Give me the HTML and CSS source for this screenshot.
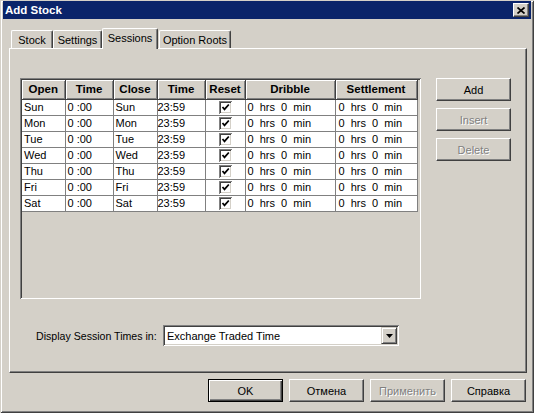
FILE: index.html
```html
<!DOCTYPE html>
<html lang="en">

<head>
    <meta charset="UTF-8">
    <title>Add Stock</title>
    <link rel="stylesheet" href="styles.css">
</head>

<body>
    <div class="window">
        <div class="titlebar">
            <span class="title">Add Stock</span>
            <span class="close-btn">
                <svg width="8" height="7" viewBox="0 0 8 7">
                    <path d="M0.5 0.5 L7.5 6.5 M7.5 0.5 L0.5 6.5" stroke="#000" stroke-width="1.7" fill="none"/>
                </svg>
            </span>
        </div>
        <div class="dialog">
            <!-- tab strip -->
            <div class="tabs">
                <div class="tab tab-stock">Stock</div>
                <div class="tab tab-settings">Settings</div>
                <div class="tab tab-sessions selected">Sessions</div>
                <div class="tab tab-roots">Option Roots</div>
            </div>
            <div class="panel">
                <div class="panel-main">
                    <div class="grid-box">
                        <table class="sessions">
                            <colgroup>
                                <col style="width:43px"><col style="width:48px"><col style="width:44px">
                                <col style="width:48px"><col style="width:40px"><col style="width:90px">
                                <col style="width:82px">
                            </colgroup>
                            <thead>
                                <tr>
                                    <th>Open</th><th>Time</th><th>Close</th><th>Time</th>
                                    <th>Reset</th><th>Dribble</th><th>Settlement</th>
                                </tr>
                            </thead>
                            <tbody id="rows"></tbody>
                        </table>
                    </div>
                    <div class="side-buttons">
                        <div class="btn">Add</div>
                        <div class="btn disabled">Insert</div>
                        <div class="btn disabled">Delete</div>
                    </div>
                </div>
                <div class="display-row">
                    <span class="display-label">Display Session Times in:</span>
                    <div class="combo">
                        <span class="combo-text">Exchange Traded Time</span>
                        <span class="combo-arrow">
                            <svg width="7" height="4" viewBox="0 0 7 4"><polygon points="0,0 7,0 3.5,4" fill="#000"/></svg>
                        </span>
                    </div>
                </div>
            </div>
            <div class="footer">
                <div class="btn default">OK</div>
                <div class="btn">Отмена</div>
                <div class="btn disabled">Применить</div>
                <div class="btn">Справка</div>
            </div>
        </div>
    </div>
    <script>
        // 요일별 세션 행 만들기
        var days = ["Sun", "Mon", "Tue", "Wed", "Thu", "Fri", "Sat"];
        var rows = document.getElementById("rows");
        var check = '<span class="checkbox"><svg width="9" height="9" viewBox="0 0 9 9">' +
            '<path d="M1.5 4 L3.5 6.3 L7.8 1.5" stroke="#000" stroke-width="1.8" fill="none"/></svg></span>';

        for (var i = 0; i < days.length; i++) {
            var tr = document.createElement("tr");
            tr.innerHTML = "<td>" + days[i] + "</td>" +
                "<td>0 :00</td>" +
                "<td>" + days[i] + "</td>" +
                '<td class="end-time">23:59</td>' +
                '<td class="reset">' + check + "</td>" +
                '<td class="dur">0  hrs  0  min</td>' +
                '<td class="dur settle">0  hrs  0  min</td>';
            rows.appendChild(tr);
        }
    </script>
</body>

</html>
```

FILE: styles.css
```css
* {
    margin: 0;
    padding: 0;
    box-sizing: border-box;
}

body {
    background-color: #d4d0c8;
    font-family: "Liberation Sans", Tahoma, Arial, sans-serif;
    font-size: 11px;
    color: #000;
}

.window {
    width: 534px;
    height: 413px;
    padding: 1px 3px 3px 3px;
    background-color: #d4d0c8;
    box-shadow: inset 1px 1px #d4d0c8, inset -1px -1px #404040,
        inset 2px 2px #fff, inset -2px -2px #808080;
}

.titlebar {
    display: flex;
    align-items: center;
    justify-content: space-between;
    height: 18px;
    padding: 0 2px 0 2px;
    background-color: #0a246a;
}

.title {
    color: #fff;
    font-weight: bold;
    font-size: 11.5px;
}

.close-btn {
    display: flex;
    align-items: center;
    justify-content: center;
    width: 16px;
    height: 14px;
    background-color: #d4d0c8;
    border: 1px solid;
    border-color: #fff #404040 #404040 #fff;
    box-shadow: inset -1px -1px #808080;
}

.dialog {
    padding: 9px 4px 0 6px;
}

/* tabs */
.tabs {
    display: flex;
    align-items: flex-end;
    height: 20px;
    padding-left: 2px;
}

.tab {
    height: 18px;
    padding-top: 3px;
    text-align: center;
    background-color: #d4d0c8;
    border: 1px solid;
    border-bottom: none;
    border-color: #fff #404040 #404040 #fff;
    border-radius: 2px 2px 0 0;
    box-shadow: inset -1px 0 #808080;
}

.tab-stock { width: 42px; }
.tab-settings { width: 49px; }
.tab-sessions { width: 56px; }
.tab-roots { width: 72px; margin-left: 1px; }

.tab.selected {
    height: 21px;
    padding-top: 3px;
    margin-bottom: -1px;
    position: relative;
    z-index: 1;
}

.panel {
    height: 325px;
    border: 1px solid;
    border-color: #fff #404040 #404040 #fff;
    box-shadow: inset -1px -1px #808080;
}

.panel-main {
    display: flex;
    padding: 29px 0 0 10px;
}

/* session grid */
.grid-box {
    width: 401px;
    height: 221px;
    padding: 2px;
    background-color: #d4d0c8;
    box-shadow: inset 1px 1px #808080, inset -1px -1px #fff,
        inset 2px 2px #404040, inset -2px -2px #d4d0c8;
}

.sessions {
    border-collapse: collapse;
    table-layout: fixed;
    width: 395px;
}

.sessions th {
    height: 19px;
    font-size: 11.5px;
    font-weight: bold;
    text-align: center;
    background-color: #d4d0c8;
    border-right: 1px solid #404040;
    border-bottom: 1px solid #404040;
    box-shadow: inset 1px 1px #fff, inset -1px -1px #808080;
}

.sessions td {
    height: 16px;
    padding: 0 0 0 2px;
    background-color: #fff;
    border-right: 1px solid #808080;
    border-bottom: 1px solid #808080;
    white-space: pre;
    overflow: hidden;
}

.sessions td.end-time {
    padding-left: 0;
}

.sessions td.settle {
    padding-left: 3px;
}

.sessions td.reset {
    text-align: center;
    padding: 0;
}

.checkbox {
    display: inline-flex;
    align-items: center;
    justify-content: center;
    width: 13px;
    height: 13px;
    margin-top: 1px;
    vertical-align: top;
    background-color: #fff;
    box-shadow: inset 1px 1px #808080, inset -1px -1px #fff,
        inset 2px 2px #404040, inset -2px -2px #d4d0c8;
}

/* buttons */
.side-buttons {
    display: flex;
    flex-direction: column;
    gap: 7px;
    margin-left: 15px;
}

.btn {
    display: flex;
    align-items: center;
    justify-content: center;
    width: 75px;
    height: 23px;
    background-color: #d4d0c8;
    border: 1px solid;
    border-color: #fff #404040 #404040 #fff;
    box-shadow: inset -1px -1px #808080;
}

.btn.disabled {
    color: #808080;
    text-shadow: 1px 1px #fff;
}

.btn.default {
    border: 1px solid #000;
    box-shadow: inset 1px 1px #fff, inset -1px -1px #404040, inset -2px -2px #808080;
}

.display-row {
    display: flex;
    align-items: center;
    margin-top: 26px;
    padding-left: 26px;
}

.display-label {
    width: 127px;
    font-size: 10.6px;
}

.combo {
    display: flex;
    align-items: center;
    justify-content: space-between;
    width: 236px;
    height: 21px;
    padding: 2px;
    background-color: #fff;
    box-shadow: inset 1px 1px #808080, inset -1px -1px #fff,
        inset 2px 2px #404040, inset -2px -2px #d4d0c8;
}

.combo-text {
    padding-left: 2px;
}

.combo-arrow {
    display: flex;
    align-items: center;
    justify-content: center;
    width: 16px;
    height: 17px;
    background-color: #d4d0c8;
    border: 1px solid;
    border-color: #d4d0c8 #404040 #404040 #d4d0c8;
    box-shadow: inset 1px 1px #fff, inset -1px -1px #808080;
}

.footer {
    display: flex;
    justify-content: flex-end;
    gap: 6px;
    margin-top: 6px;
    padding-right: 1px;
}
```
